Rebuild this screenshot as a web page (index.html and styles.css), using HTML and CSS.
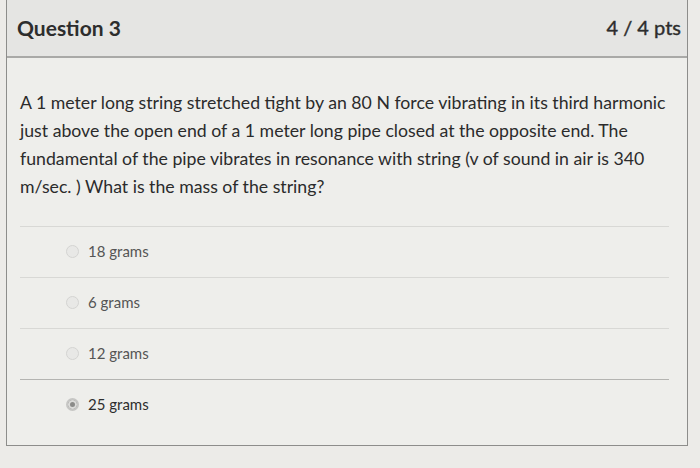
FILE: index.html
```html
<!DOCTYPE html>
<html lang="en">
<head>
    <meta charset="UTF-8">
    <title>Question 3</title>
    <link rel="stylesheet" href="styles.css">
</head>
<body>
<div class="question">
    <div class="question-header">
        <span class="question-name">Question 3</span>
        <span class="question-points">4 / 4 pts</span>
    </div>
    <div class="question-text">
        A 1 meter long string stretched tight by an 80 N force vibrating in its third harmonic
        just above the open end of a 1 meter long pipe closed at the opposite end. The
        fundamental of the pipe vibrates in resonance with string (v of sound in air is 340
        m/sec. ) What is the mass of the string?
    </div>
    <div class="answers">
        <div class="answer"><span class="radio"></span>18 grams</div>
        <div class="answer"><span class="radio"></span>6 grams</div>
        <div class="answer"><span class="radio"></span>12 grams</div>
        <div class="answer selected"><span class="radio"></span>25 grams</div>
    </div>
</div>
</body>
</html>
```

FILE: styles.css
```css
body {
    margin: 0;
    padding: 0 12px 0 6px;
    background-color: #ecebe8;
    font-family: Lato, "Open Sans", sans-serif;
    height: 468px;
    overflow: hidden;
}
.question {
    border: 1px solid #8d8d8b;
    border-top: none;
    background-color: #eeeeeb;
    height: 446px;
    box-sizing: border-box;
}
.question-header {
    display: flex;
    justify-content: space-between;
    align-items: center;
    height: 58px;
    padding: 0 6px 2px 10px;
    box-sizing: border-box;
    background-color: #e5e5e3;
    border-bottom: 2px solid #a9a9a7;
}
.question-name {
    font-size: 21px;
    font-weight: bold;
    color: #2d2d2d;
}
.question-points {
    font-size: 20px;
    color: #2d2d2d;
    -webkit-text-stroke: 0.4px #2d2d2d;
}
.question-text {
    padding: 31px 10px 0 13px;
    font-size: 17.7px;
    line-height: 28px;
    color: #2b2b2b;
    height: 168px;
    box-sizing: border-box;
}
.answers {
    margin: 0 18px 0 13px;
}
.answer {
    display: flex;
    align-items: flex-start;
    gap: 9px;
    height: 51px;
    padding: 15px 0 0 46px;
    box-sizing: border-box;
    border-top: 1px solid #d8d8d5;
    font-size: 15px;
    line-height: 18px;
    color: #555;
}
.answer:last-child {
    border-top-color: #b4b4b1;
}
.answer.selected {
    color: #2d2d2d;
}
.radio {
    width: 13px;
    height: 13px;
    margin-top: 3px;
    border-radius: 50%;
    border: 1px solid #d4d4d2;
    background-color: #e8e8e6;
    box-sizing: border-box;
}
.selected .radio {
    border: 2px solid #c6c6c4;
    background-color: #8b8b89;
    box-shadow: inset 0 0 0 2px #dcdcda;
}
```
